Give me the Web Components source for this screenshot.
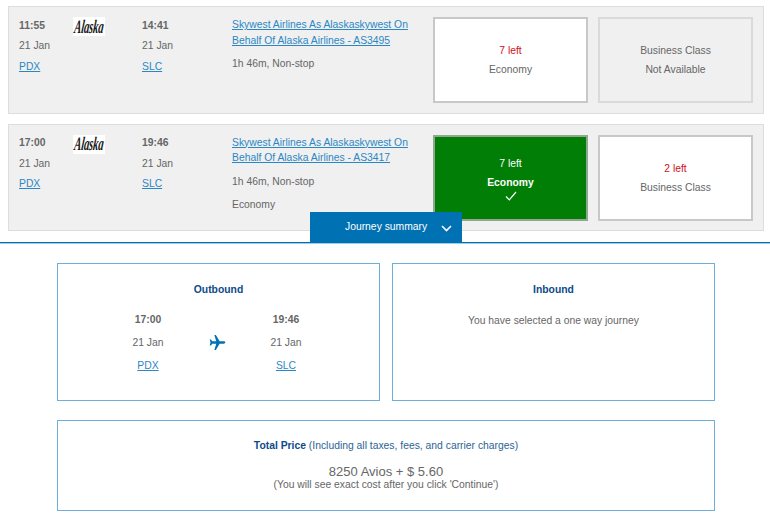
<!DOCTYPE html>
<html>
<head>
<meta charset="utf-8">
<title>Journey</title>
<style>
html,body{margin:0;padding:0;background:#fff;}
body{font-family:"Liberation Sans",Arial,sans-serif;font-size:10.35px;color:#666;width:770px;height:515px;overflow:hidden;}
.results{padding:6px 6px 0 8px;display:flex;flex-direction:column;gap:10px;}
.panels{padding:20px 55px 0 57px;display:grid;grid-template-columns:323px 323px;column-gap:12px;row-gap:19px;}
</style>
</head>
<body>
<div class="results">
  <flight-card dep="11:55" arr="14:41" flight="AS3495">
    <fare-box slot="fare" kind="open"><span class="left">7 left</span><span>Economy</span></fare-box>
    <fare-box slot="fare" kind="none"><span>Business Class</span><span>Not Available</span></fare-box>
  </flight-card>
  <flight-card dep="17:00" arr="19:46" flight="AS3417" cabin="Economy">
    <fare-box slot="fare" kind="picked"><span>7 left</span><b>Economy</b></fare-box>
    <fare-box slot="fare" kind="open"><span class="left">2 left</span><span>Business Class</span></fare-box>
  </flight-card>
</div>
<summary-bar></summary-bar>
<div class="panels">
  <journey-panel heading="Outbound">
    <leg-info time="17:00" date="21 Jan" code="PDX"></leg-info>
    <svg slot="plane" width="17" height="17" viewBox="0 0 24 24"><path fill="#0071b2" d="M23 12c0-1-1-1.700-2.200-1.700H15L9.700 1.500H7.600l2.600 8.800H4.700L2.700 7.600H1l1.100 4.400L1 16.400h1.700l2-2.700h5.500l-2.600 8.800h2.100l5.300-8.800h5.800C22 13.700 23 13 23 12z"/></svg>
    <leg-info slot="end" time="19:46" date="21 Jan" code="SLC"></leg-info>
  </journey-panel>
  <journey-panel heading="Inbound" note="You have selected a one way journey"></journey-panel>
  <price-panel></price-panel>
</div>

<template id="flight-tpl">
  <style>
    :host{display:grid;grid-template-columns:54px 69px 90px 201px 165px 155px;box-sizing:border-box;height:107.500px;background:#f0f0f0;border:1px solid #dddddd;padding:10px 10px 0 10px;}
    .col{display:flex;flex-direction:column;}
    .col span,.col a{line-height:20.500px;}
    .t{font-weight:bold;margin-top:-1.500px;}
    a{color:#2b87c4;}
    .logo{width:32px;height:19px;background:#fff;display:flex;align-items:center;justify-content:center;font:italic bold 19px "Liberation Serif",serif;color:#1a1a1a;}
    .logo span{display:block;flex:none;transform:scaleX(.56) skewX(-12deg);letter-spacing:-.3px;}
    .info{display:flex;flex-direction:column;}
    .info a{line-height:15.500px;width:180px;}
    .meta{margin-top:8px;line-height:15px;}
    .cabin{margin-top:8px;line-height:15px;}
    .fares{grid-column:5 / 7;display:flex;gap:10px;height:86px;}
    ::slotted(fare-box){flex:none;}
  </style>
  <div class="col"><span class="t dep"></span><span>21 Jan</span><a href="#">PDX</a></div>
  <div><div class="logo"><span>Alaska</span></div></div>
  <div class="col"><span class="t arr"></span><span>21 Jan</span><a href="#">SLC</a></div>
  <div class="info">
    <a href="#" class="fl"></a>
    <div class="meta">1h 46m, Non-stop</div>
    <div class="cabin"></div>
  </div>
  <div class="fares"><slot name="fare"></slot></div>
</template>

<template id="fare-tpl">
  <style>
    :host{display:flex;flex-direction:column;align-items:center;justify-content:center;box-sizing:border-box;width:155px;height:86px;border:2px solid #c8c8c8;background:#fff;color:#666;line-height:19px;text-align:center;}
    :host([kind="none"]){background:#f0f0f0;border-color:#dadada;}
    :host([kind="picked"]){background:#007e06;border-color:#8fa88f;color:#fff;}
    ::slotted(.left){color:#d0111b;}
    .tick{display:none;margin-top:-1px;}
    :host([kind="picked"]) .tick{display:block;}
  </style>
  <slot></slot>
  <svg class="tick" width="12" height="10" viewBox="0 0 12 10"><path d="M1 5.500L4.300 8.800L11 1" fill="none" stroke="#fff" stroke-width="1.200"/></svg>
</template>

<template id="summary-tpl">
  <style>
    :host{display:flex;position:relative;margin-top:-19px;height:31px;box-sizing:border-box;border-bottom:1px solid #0071b2;box-shadow:0 1px 0 #9fcbe6;}
    button{margin:0 0 0 310px;width:152px;height:31px;border:0;padding:0 0 2px 35px;background:#0071b2;color:#fff;font:10.350px "Liberation Sans",Arial,sans-serif;display:flex;align-items:center;}
    svg{margin-left:14px;margin-top:3px;}
  </style>
  <button>Journey summary<svg width="11" height="7" viewBox="0 0 11 7"><path d="M1 1L5.500 5.500L10 1" fill="none" stroke="#fff" stroke-width="1.600"/></svg></button>
</template>

<template id="panel-tpl">
  <style>
    :host{display:block;box-sizing:border-box;height:138px;border:1px solid #6db0dc;background:#fff;text-align:center;padding-top:18.500px;}
    h3{margin:0;font-size:10.350px;line-height:13px;color:#0d4a8a;font-weight:bold;}
    .note{margin-top:17px;line-height:15px;}
    .legs{display:flex;justify-content:center;align-items:center;margin-top:12.500px;padding-right:3px;}
    .mid{width:46px;margin:0 23px;display:flex;justify-content:center;}
  </style>
  <h3></h3>
  <div class="note"></div>
  <div class="legs"><slot></slot><div class="mid"><slot name="plane"></slot></div><slot name="end"></slot></div>
</template>

<template id="leg-tpl">
  <style>
    :host{display:flex;flex-direction:column;align-items:center;width:46px;line-height:23px;}
    a{color:#2b87c4;}
  </style>
  <b></b><span></span><a href="#"></a>
</template>

<template id="price-tpl">
  <style>
    :host{grid-column:1 / 3;display:block;box-sizing:border-box;height:90.500px;border:1px solid #6db0dc;background:#fff;text-align:center;padding-top:18px;}
    .h{line-height:13px;color:#2a6496;}
    .h b{color:#0d4a8a;}
    .p{font-size:13px;line-height:15px;margin-top:11.500px;}
    .s{line-height:11px;}
  </style>
  <div class="h"><b>Total Price</b> (Including all taxes, fees, and carrier charges)</div>
  <div class="p">8250 Avios + $ 5.60</div>
  <div class="s">(You will see exact cost after you click 'Continue')</div>
</template>

<script>
function stamp(el, id) {
  const root = el.attachShadow({ mode: "open" });
  root.appendChild(document.getElementById(id).content.cloneNode(true));
  return root;
}

class FlightCard extends HTMLElement {
  constructor() {
    super();
    this.$root = stamp(this, "flight-tpl");
  }
  connectedCallback() {
    this.$root.querySelector(".dep").textContent = this.getAttribute("dep");
    this.$root.querySelector(".arr").textContent = this.getAttribute("arr");
    this.$root.querySelector(".fl").textContent =
      "Skywest Airlines As Alaskaskywest On Behalf Of Alaska Airlines - " + this.getAttribute("flight");
    this.$root.querySelector(".cabin").textContent = this.getAttribute("cabin") || "";
  }
}

class FareBox extends HTMLElement {
  constructor() {
    super();
    stamp(this, "fare-tpl");
  }
}

class SummaryBar extends HTMLElement {
  constructor() {
    super();
    stamp(this, "summary-tpl");
  }
}

class JourneyPanel extends HTMLElement {
  constructor() {
    super();
    this.$root = stamp(this, "panel-tpl");
  }
  connectedCallback() {
    this.$root.querySelector("h3").textContent = this.getAttribute("heading");
    const note = this.$root.querySelector(".note");
    if (this.hasAttribute("note")) {
      note.textContent = this.getAttribute("note");
      this.$root.querySelector(".legs").style.display = "none";
    } else {
      note.style.display = "none";
    }
  }
}

class LegInfo extends HTMLElement {
  constructor() {
    super();
    this.$root = stamp(this, "leg-tpl");
  }
  connectedCallback() {
    this.$root.querySelector("b").textContent = this.getAttribute("time");
    this.$root.querySelector("span").textContent = this.getAttribute("date");
    this.$root.querySelector("a").textContent = this.getAttribute("code");
  }
}

class PricePanel extends HTMLElement {
  constructor() {
    super();
    stamp(this, "price-tpl");
  }
}

customElements.define("flight-card", FlightCard);
customElements.define("fare-box", FareBox);
customElements.define("summary-bar", SummaryBar);
customElements.define("journey-panel", JourneyPanel);
customElements.define("leg-info", LegInfo);
customElements.define("price-panel", PricePanel);
</script>
</body>
</html>
